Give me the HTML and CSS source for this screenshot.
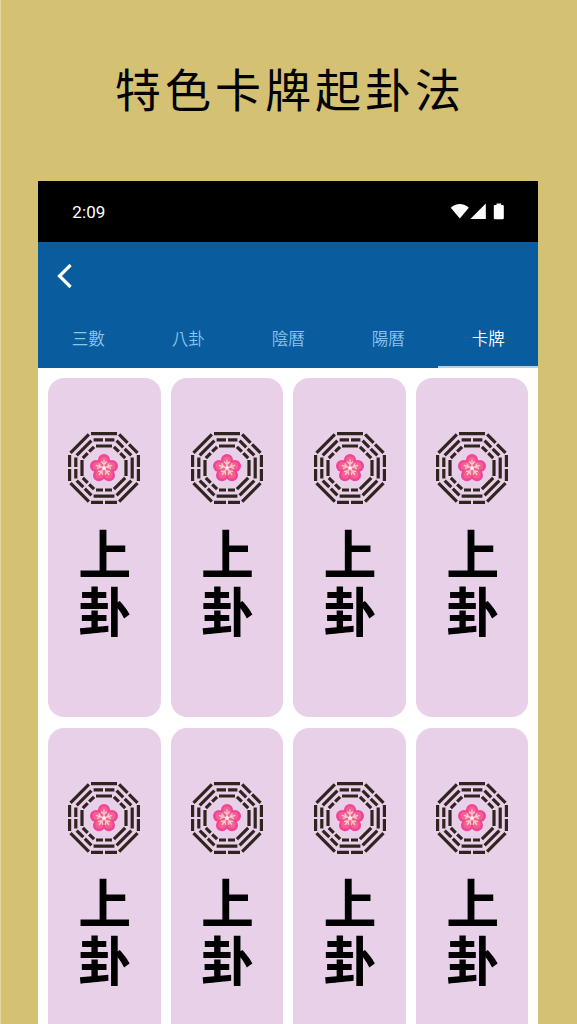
FILE: index.html
```html
<!DOCTYPE html>
<html lang="zh-Hant">
<head>
<meta charset="utf-8">
<title>特色卡牌起卦法</title>
<link rel="stylesheet" href="styles.css">
</head>
<body>
<svg class="defs" width="0" height="0" aria-hidden="true">
  <defs>
    <symbol id="bagua" viewBox="-37 -37 74 74">
      <g stroke="#30241f" stroke-width="3.200" fill="none">
        <path d="M-13-34.4H13M-10.4-28.200H-1M1-28.200H10.4M-8-22H8"/>
        <path transform="rotate(45)" d="M-13-34.4H-1M1-34.4H13M-10.4-28.200H-1M1-28.200H10.4M-8-22H-1M1-22H8"/>
        <path transform="rotate(90)" d="M-13-34.4H-1M1-34.4H13M-10.4-28.200H10.4M-8-22H8"/>
        <path transform="rotate(135)" d="M-13-34.4H13M-10.4-28.200H10.4M-8-22H8"/>
        <path transform="rotate(180)" d="M-13-34.4H-1M1-34.4H13M-10.4-28.200H10.4M-8-22H-1M1-22H8"/>
        <path transform="rotate(225)" d="M-13-34.4H13M-10.4-28.200H-1M1-28.200H10.4M-8-22H-1M1-22H8"/>
        <path transform="rotate(270)" d="M-13-34.4H-1M1-34.4H13M-10.4-28.200H-1M1-28.200H10.4M-8-22H8"/>
        <path transform="rotate(315)" d="M-13-34.4H13M-10.4-28.200H10.4M-8-22H-1M1-22H8"/>
      </g>
      <g fill="#f3429a">
        <circle cx="0" cy="-8" r="6"/><circle cx="8" cy="-2" r="6"/><circle cx="5" cy="7.3" r="6"/><circle cx="-5" cy="7.3" r="6"/><circle cx="-8" cy="-2" r="6"/><circle r="10"/>
      </g>
      <g fill="#f1628c">
        <circle cx="0" cy="-7.4" r="4"/><circle cx="7.3" cy="-2" r="4"/><circle cx="4.600" cy="6.600" r="4"/><circle cx="-4.600" cy="6.600" r="4"/><circle cx="-7.3" cy="-2" r="4"/><circle r="7.500"/>
      </g>
      <g stroke="#fbc5cf" stroke-width="1.4" stroke-linecap="round" fill="none">
        <path d="M0 0V-8M0-3.500L-2.400-6M0-3.500L2.400-6"/>
        <path transform="rotate(72)" d="M0 0V-8M0-3.500L-2.400-6M0-3.500L2.400-6"/>
        <path transform="rotate(144)" d="M0 0V-8M0-3.500L-2.400-6M0-3.500L2.400-6"/>
        <path transform="rotate(216)" d="M0 0V-8M0-3.500L-2.400-6M0-3.500L2.400-6"/>
        <path transform="rotate(288)" d="M0 0V-8M0-3.500L-2.400-6M0-3.500L2.400-6"/>
      </g>
      <circle r="1.8" fill="#fff0ee"/>
    </symbol>
  </defs>
</svg>
<h1 class="headline">特色卡牌起卦法</h1>
<main class="phone">
  <div class="status">
    <span class="clock">2:09</span>
    <svg class="status-icons" width="54" height="18" viewBox="0 0 54 18" fill="#fff">
      <path d="M.8 4.8C6-.2 13.600-.2 18.800 4.800L9.800 15.400Z"/>
      <path d="M20.400 15.900L35.800.6V15.900Z"/>
      <path d="M46.500.4h4.600v1.500h1.500q1.200 0 1.200 1.200v11.900q0 1.200-1.200 1.200h-7.600q-1.200 0-1.200-1.200v-11.900q0-1.200 1.200-1.200h1.500z"/>
    </svg>
  </div>
  <header class="appbar">
    <svg class="back" width="18" height="26" viewBox="0 0 18 26" fill="none" stroke="#fff" stroke-width="3.200"><path d="M14.600 2L3.500 13l11.100 11"/></svg>
    <nav class="tabs">
      <span class="tab">三數</span><span class="tab">八卦</span><span class="tab">陰曆</span><span class="tab">陽曆</span><span class="tab active">卡牌</span>
    </nav>
  </header>
  <section class="cards">
    <article class="card"><svg class="emblem"><use href="#bagua"/></svg><p class="label">上卦</p></article>
    <article class="card"><svg class="emblem"><use href="#bagua"/></svg><p class="label">上卦</p></article>
    <article class="card"><svg class="emblem"><use href="#bagua"/></svg><p class="label">上卦</p></article>
    <article class="card"><svg class="emblem"><use href="#bagua"/></svg><p class="label">上卦</p></article>
    <article class="card"><svg class="emblem"><use href="#bagua"/></svg><p class="label">上卦</p></article>
    <article class="card"><svg class="emblem"><use href="#bagua"/></svg><p class="label">上卦</p></article>
    <article class="card"><svg class="emblem"><use href="#bagua"/></svg><p class="label">上卦</p></article>
    <article class="card"><svg class="emblem"><use href="#bagua"/></svg><p class="label">上卦</p></article>
  </section>
</main>
</body>
</html>
```
FILE: styles.css
```css
* { box-sizing: border-box; }
body {
  margin: 0;
  height: 1024px;
  overflow: hidden;
  background: #d4c173;
  border-left: 1px solid #e3d7a3;
  font-family: Roboto, "Noto Sans CJK TC", sans-serif;
  display: flex;
  flex-direction: column;
}
.defs { display: block; flex: none; height: 0; }
.headline {
  flex: none;
  margin: 0;
  height: 181px;
  padding: 52px 0 0 114px;
  font: 400 46px/70px "Noto Sans CJK TC", sans-serif;
  letter-spacing: 4px;
  color: #000;
  white-space: nowrap;
}
.phone {
  flex: none;
  width: 500px;
  height: 843px;
  margin-left: 37.3px;
  background: #fff;
  overflow: hidden;
}
.status {
  height: 61px;
  background: #000;
  color: #fff;
  display: flex;
  align-items: center;
  justify-content: space-between;
  padding: 0 34px;
}
.clock { font-size: 17px; letter-spacing: .1px; }
.status-icons { display: block; }
.appbar {
  height: 126.400px;
  background: #095c9e;
  display: flex;
  flex-direction: column;
  justify-content: space-between;
}
.back { margin: 21px 0 0 18px; }
.tabs { display: grid; grid-template-columns: repeat(5, 1fr); height: 57px; }
.tab {
  display: flex;
  align-items: center;
  justify-content: center;
  font-size: 16.600px;
  font-weight: 350;
  color: #8bc5ee;
  padding-bottom: 1px;
  border-bottom: 2.500px solid transparent;
}
.tab.active { color: #fff; border-color: #b9cfe2; }
.cards {
  display: grid;
  grid-template-columns: repeat(4, 112.500px);
  column-gap: 10.100px;
  grid-auto-rows: 338.500px;
  row-gap: 11px;
  padding: 9.800px 0 0 9.800px;
}
.card {
  background: #e9d0e9;
  border-radius: 16px;
  display: flex;
  flex-direction: column;
  align-items: center;
  padding-top: 53px;
}
.emblem { width: 74px; height: 74px; display: block; }
.label {
  margin: 22.500px 0 0;
  font: 700 53px/57px "Noto Sans CJK TC", sans-serif;
  letter-spacing: 4px;
  writing-mode: vertical-rl;
  color: #000;
}
```
